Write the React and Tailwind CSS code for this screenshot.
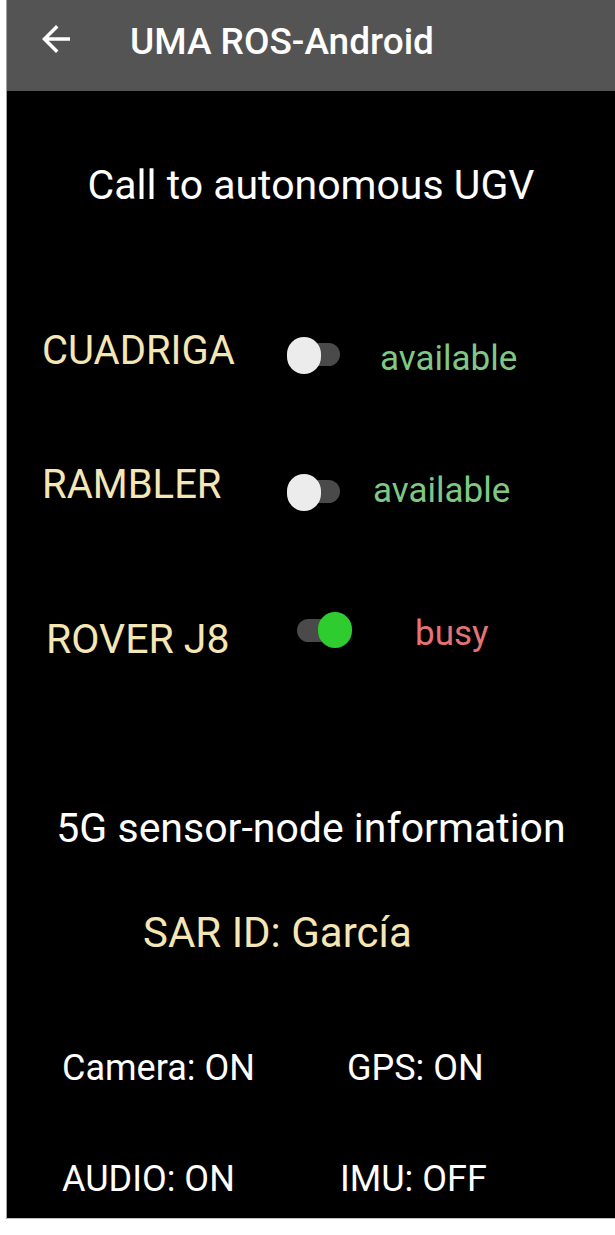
import React from "react";

const cream = "text-[#f5e6b5]";

function Toggle({ on }) {
  if (on) {
    return (
      <div className="relative w-[55px] h-[36px] shrink-0">
        <div className="absolute left-0 top-[7px] w-[48px] h-[23px] rounded-full bg-[#4a4a4a]" />
        <div className="absolute left-[21px] top-0 w-[34px] h-[36px] rounded-full bg-[#2ecc2e]" />
      </div>
    );
  }
  return (
    <div className="relative w-[53px] h-[37px] shrink-0">
      <div className="absolute left-[8px] top-[6px] w-[45px] h-[23px] rounded-full bg-[#4a4a4a]" />
      <div className="absolute left-0 top-0 w-[34px] h-[37px] rounded-full bg-[#ececec]" />
    </div>
  );
}

export default function App() {
  return (
    <div className="w-[615px] h-[1235px] bg-white font-[family-name:Roboto,sans-serif]">
      <div className="ml-[6px] w-[609px] border-l border-[#a0a0a0]">
        {/* app bar */}
        <div className="h-[91px] bg-[#545454] flex items-start">
          <svg
            viewBox="0 0 24 24"
            className="ml-[28px] mt-[18px] w-[42px] h-[42px] shrink-0"
            fill="white"
          >
            <path d="M20 11H7.83l5.59-5.59L12 4l-8 8 8 8 1.41-1.41L7.83 13H20v-2z" />
          </svg>
          <div className="ml-[53px] mt-[23px] text-[37px] leading-none font-medium text-white">
            UMA ROS-Android
          </div>
        </div>

        {/* content */}
        <div className="h-[1128px] bg-black border-b border-[#bdbdbd] flex flex-col">
          <div className="mt-[74px] h-[41px] text-[41px] leading-none text-white text-center">
            Call to autonomous UGV
          </div>

          {/* CUADRIGA */}
          <div className="mt-[125px] h-[45px] flex items-start">
            <div className={`ml-[35px] w-[245px] text-[40px] leading-none ${cream}`}>CUADRIGA</div>
            <div className="mt-[6px]">
              <Toggle on={false} />
            </div>
            <div className="ml-[40px] mt-[10px] text-[35px] leading-none text-[#81c784]">available</div>
          </div>

          {/* RAMBLER */}
          <div className="mt-[89px] h-[47px] flex items-start">
            <div className={`ml-[35px] w-[245px] text-[40px] leading-none ${cream}`}>RAMBLER</div>
            <div className="mt-[9px]">
              <Toggle on={false} />
            </div>
            <div className="ml-[33px] mt-[8px] text-[35px] leading-none text-[#81c784]">available</div>
          </div>

          {/* ROVER J8 */}
          <div className="mt-[100px] h-[48px] flex items-start">
            <div className={`ml-[39px] w-[251px] mt-[7px] text-[41px] leading-none ${cream}`}>ROVER J8</div>
            <Toggle on={true} />
            <div className="ml-[63px] mt-[4px] text-[35px] leading-none text-[#e57373]">busy</div>
          </div>

          <div className="mt-[148px] h-[41px] text-[41px] leading-none text-white text-center">
            5G sensor-node information
          </div>

          <div className={`mt-[63px] ml-[136px] h-[42px] text-[42px] leading-none ${cream}`}>
            SAR ID: García
          </div>

          <div className="mt-[96px] h-[37px] flex text-[36px] leading-none text-white">
            <div className="ml-[55px] w-[285px]">Camera: ON</div>
            <div>GPS: ON</div>
          </div>

          <div className="mt-[74px] h-[37px] flex text-[36px] leading-none text-white">
            <div className="ml-[55px] w-[278px]">AUDIO: ON</div>
            <div>IMU: OFF</div>
          </div>
        </div>
      </div>
    </div>
  );
}
